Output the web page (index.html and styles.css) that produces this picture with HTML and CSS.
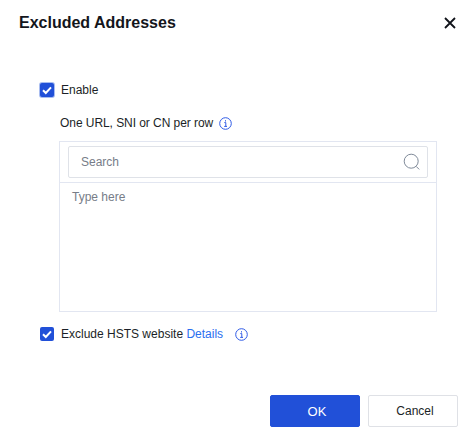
FILE: index.html
```html
<!DOCTYPE html>
<html lang="en">
<head>
<meta charset="utf-8">
<title>Excluded Addresses</title>
<link rel="stylesheet" href="styles.css">
</head>
<body>
<div class="dialog">
  <header class="head">
    <h1 class="title">Excluded Addresses</h1>
    <svg class="close" width="12" height="12" viewBox="0 0 12 12"><path d="M1 1l10 10M11 1L1 11" stroke="#10131a" stroke-width="1.8" fill="none"/></svg>
  </header>
  <main class="body">
    <label class="check-row">
      <span class="box box-focus"><svg width="14" height="14" viewBox="0 0 14 14"><path d="M3 7.2l2.8 2.8L11 4.4" stroke="#fff" stroke-width="2" fill="none"/></svg></span>
      <span>Enable</span>
    </label>
    <div class="hint">
      <span class="hint-text">One URL, SNI or CN per row</span>
      <svg class="info" width="13" height="13" viewBox="0 0 13 13"><circle cx="6.5" cy="6.5" r="5.8" fill="none" stroke="#2f5be6" stroke-width="1"/><path d="M5.3 5.6h1.5v3.6M5.2 9.4h2.8M6.5 3.2v1.3" fill="none" stroke="#2f5be6" stroke-width="1"/></svg>
    </div>
    <section class="panel">
      <div class="search-wrap">
        <div class="search">
          <span class="search-text">Search</span>
          <svg width="18" height="18" viewBox="0 0 18 18"><circle cx="8.2" cy="8.2" r="7" fill="none" stroke="#7f8a99" stroke-width="1"/><path d="M13.2 13.4l3 3" stroke="#7f8a99" stroke-width="1"/></svg>
        </div>
      </div>
      <div class="type-here">Type here</div>
    </section>
    <div class="check-row hsts">
      <span class="box"><svg width="14" height="14" viewBox="0 0 14 14"><path d="M3 7.2l2.8 2.8L11 4.4" stroke="#fff" stroke-width="2" fill="none"/></svg></span>
      <span>Exclude HSTS website <a class="link" href="#">Details</a></span>
      <svg class="info info-gap" width="13" height="13" viewBox="0 0 13 13"><circle cx="6.5" cy="6.5" r="5.8" fill="none" stroke="#2f5be6" stroke-width="1"/><path d="M5.3 5.6h1.5v3.6M5.2 9.4h2.8M6.5 3.2v1.3" fill="none" stroke="#2f5be6" stroke-width="1"/></svg>
    </div>
  </main>
  <footer class="foot">
    <button class="btn primary" type="button">OK</button>
    <button class="btn" type="button">Cancel</button>
  </footer>
</div>
</body>
</html>
```
FILE: styles.css
```css
* { box-sizing: border-box; }
html, body { margin: 0; height: 100%; background: #fff; }
body { font-family: "Liberation Sans", Arial, sans-serif; font-size: 12px; color: #1b1f27; }
.dialog { width: 471px; height: 442px; display: flex; flex-direction: column; overflow: hidden; }
.head { display: flex; justify-content: space-between; align-items: center; padding: 13px 15px 0 19px; height: 33px; }
.title { margin: 0; font-size: 16px; line-height: 20px; font-weight: 700; color: #14161c; }
.close { display: block; }
.body { padding: 50px 34px 0 40px; flex: 1; }
.check-row { display: flex; align-items: center; height: 14px; line-height: 14px; }
.box { width: 14px; height: 14px; border-radius: 2px; background: #2150d8; margin-right: 7px; display: block; flex: none; }
.box svg { display: block; }
.box-focus { box-shadow: 0 0 0 1px #a9bdf0; }
.hint { display: flex; align-items: center; margin: 19px 0 0 20px; height: 14px; }
.hint-text { letter-spacing: -0.06px; }
.info { display: block; flex: none; margin-left: 6px; }
.panel { margin: 11px 0 0 19px; width: 378px; height: 171px; border: 1px solid #e2e6f1; }
.search-wrap { padding: 4px 8px 4px 8px; border-bottom: 1px solid #e2e6f1; }
.search { height: 32px; border: 1px solid #dfe2e8; border-radius: 2px; display: flex; align-items: center; justify-content: space-between; padding: 0 6px 0 12px; }
.search-text, .type-here { color: #777d88; }
.type-here { padding: 7px 12px; line-height: 14px; }
.hsts { margin-top: 15px; }
.link { color: #2a6ff0; text-decoration: none; }
.info-gap { margin-left: 12px; }
.foot { display: flex; justify-content: flex-end; gap: 8px; padding: 0 13px 15px 0; }
.btn { width: 90px; height: 32px; padding: 0 0 0 4px; border: 1px solid #dfe1e6; border-radius: 2px; background: #fff; color: #1b1f27; font: 12px "Liberation Sans", Arial, sans-serif; }
.primary { background: #2150d8; border-color: #2150d8; color: #fff; font-size: 13px; }
```
